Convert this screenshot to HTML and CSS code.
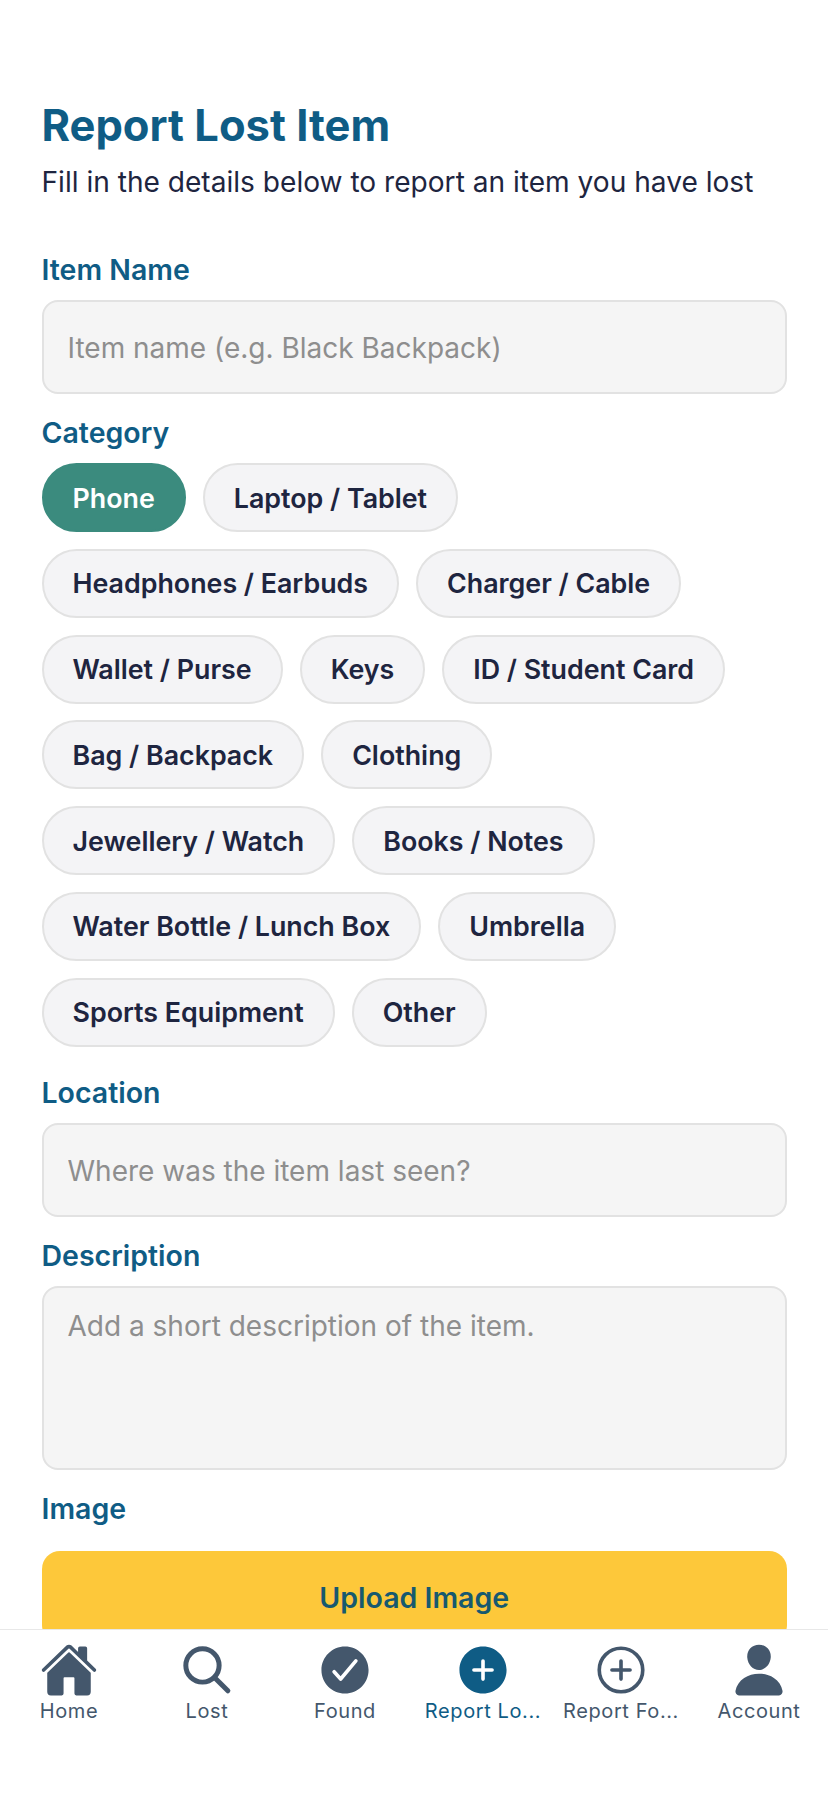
FILE: index.html
```html
<!DOCTYPE html>
<html lang="en">
<head>
    <meta charset="UTF-8">
    <meta name="viewport" content="width=device-width, initial-scale=1.0">
    <title>Report Lost Item</title>
    <link rel="stylesheet" href="styles.css">
</head>
<body>
    <div class="app">
        <main class="content">
            <h1 class="title">Report Lost Item</h1>
            <p class="subtitle">Fill in the details below to report an item you have lost</p>

            <form class="report-form">
                <label class="field-label">Item Name</label>
                <input class="field" type="text" placeholder="Item name (e.g. Black Backpack)">

                <label class="field-label">Category</label>
                <div class="chips">
                    <button type="button" class="chip selected">Phone</button>
                    <button type="button" class="chip">Laptop / Tablet</button>
                    <button type="button" class="chip">Headphones / Earbuds</button>
                    <button type="button" class="chip">Charger / Cable</button>
                    <button type="button" class="chip">Wallet / Purse</button>
                    <button type="button" class="chip">Keys</button>
                    <button type="button" class="chip">ID / Student Card</button>
                    <button type="button" class="chip">Bag / Backpack</button>
                    <button type="button" class="chip">Clothing</button>
                    <button type="button" class="chip">Jewellery / Watch</button>
                    <button type="button" class="chip">Books / Notes</button>
                    <button type="button" class="chip">Water Bottle / Lunch Box</button>
                    <button type="button" class="chip">Umbrella</button>
                    <button type="button" class="chip">Sports Equipment</button>
                    <button type="button" class="chip">Other</button>
                </div>

                <label class="field-label">Location</label>
                <input class="field" type="text" placeholder="Where was the item last seen?">

                <label class="field-label">Description</label>
                <textarea class="field field-area" placeholder="Add a short description of the item."></textarea>

                <label class="field-label">Image</label>
                <button type="button" class="upload-btn">Upload Image</button>
            </form>
        </main>

        <nav class="tab-bar">
            <a class="tab">
                <svg class="tab-icon" viewBox="0 0 512 512" fill="currentColor">
                    <path d="M261.56 101.28a8 8 0 00-11.06 0L66.4 277.15a8 8 0 00-2.47 5.79L63.9 448a32 32 0 0032 32H192a16 16 0 0016-16V328a8 8 0 018-8h80a8 8 0 018 8v136a16 16 0 0016 16h96.06a32 32 0 0032-32V282.94a8 8 0 00-2.47-5.79z"/>
                    <path d="M490.91 244.15l-74.8-71.56V64a16 16 0 00-16-16h-48a16 16 0 00-16 16v32l-57.92-55.38C272.77 35.14 264.71 32 256 32c-8.68 0-16.72 3.14-22.14 8.63l-212.7 203.5c-6.22 6-7 15.87-1.34 22.37A16 16 0 0043 267.56L250.5 69.28a8 8 0 0111.06 0l207.52 198.28a16 16 0 0022.59-.44c6.14-6.36 5.63-16.86-.76-22.97z"/>
                </svg>
                <span class="tab-label">Home</span>
            </a>
            <a class="tab">
                <svg class="tab-icon" viewBox="0 0 512 512" fill="none" stroke="currentColor" stroke-width="44" stroke-linecap="round">
                    <circle cx="216" cy="216" r="147"/>
                    <path d="M322 322L440 440"/>
                </svg>
                <span class="tab-label">Lost</span>
            </a>
            <a class="tab">
                <svg class="tab-icon" viewBox="0 0 512 512" fill="currentColor">
                    <path d="M256 48C141.31 48 48 141.31 48 256s93.31 208 208 208 208-93.31 208-208S370.69 48 256 48zm108.25 138.36l-134.4 160a16 16 0 01-12 5.71h-.27a16 16 0 01-11.89-5.3l-57.6-64a16 16 0 1123.78-21.4l45.29 50.32 122.59-145.91a16 16 0 0124.5 20.58z"/>
                </svg>
                <span class="tab-label">Found</span>
            </a>
            <a class="tab active">
                <svg class="tab-icon" viewBox="0 0 512 512" fill="currentColor">
                    <path d="M256 48C141.31 48 48 141.31 48 256s93.31 208 208 208 208-93.31 208-208S370.69 48 256 48zm80 224h-64v64a16 16 0 01-32 0v-64h-64a16 16 0 010-32h64v-64a16 16 0 0132 0v64h64a16 16 0 010 32z"/>
                </svg>
                <span class="tab-label">Report Lo...</span>
            </a>
            <a class="tab">
                <svg class="tab-icon" viewBox="0 0 512 512" fill="none" stroke="currentColor" stroke-width="32" stroke-linecap="round">
                    <path d="M448 256c0-106-86-192-192-192S64 150 64 256s86 192 192 192 192-86 192-192z"/>
                    <path d="M256 176v160M336 256H176"/>
                </svg>
                <span class="tab-label">Report Fo...</span>
            </a>
            <a class="tab">
                <svg class="tab-icon" viewBox="0 0 512 512" fill="currentColor">
                    <path d="M332.64 64.58C313.18 43.57 286 32 256 32c-30.16 0-57.43 11.5-76.8 32.38-19.58 21.11-29.12 49.8-26.88 80.78C156.76 206.28 203.27 256 256 256s99.16-49.71 103.67-110.82c2.27-30.7-7.33-59.33-27.03-80.6z"/>
                    <path d="M432 480H80a31 31 0 01-24.2-11.13c-6.5-7.77-9.12-18.38-7.18-29.11C57.06 392.94 83.4 353.61 124.8 326c36.78-24.51 83.37-38 131.2-38s94.42 13.5 131.2 38c41.4 27.6 67.74 66.93 76.18 113.75 1.94 10.73-.68 21.34-7.18 29.11A31 31 0 01432 480z"/>
                </svg>
                <span class="tab-label">Account</span>
            </a>
        </nav>
    </div>
</body>
</html>
```

FILE: styles.css
```css
:root {
    --primary: #0f5c85;
    --teal: #3b8b7e;
    --ink: #1e2540;
    --muted: #44576c;
    --field-bg: #f5f5f5;
    --field-border: #e2e2e2;
}

* {
    box-sizing: border-box;
}

html, body {
    margin: 0;
    height: 100%;
}

body {
    background: #fff;
    font-family: Inter, "Noto Sans", sans-serif;
    overflow: hidden;
}

.app {
    height: 1800px;
    display: flex;
    flex-direction: column;
}

.content {
    flex: 1;
    min-height: 0;
    overflow: hidden;
    padding: 101px 41px 0 41.5px;
}

.title {
    margin: 0;
    font-size: 43.5px;
    line-height: 48px;
    font-weight: 700;
    color: var(--primary);
}

.subtitle {
    margin: 15px 0 53px;
    font-size: 28.1px;
    line-height: 36px;
    color: var(--ink);
}

.report-form {
    display: flex;
    flex-direction: column;
}

.field-label {
    margin-bottom: 13px;
    font-size: 28.5px;
    line-height: 34px;
    font-weight: 600;
    color: var(--primary);
}

.field {
    width: 100%;
    height: 94px;
    margin-bottom: 22px;
    padding: 2px 24px 0;
    background: var(--field-bg);
    border: 2px solid var(--field-border);
    border-radius: 16px;
    font-family: inherit;
    font-size: 28px;
    color: var(--ink);
    outline: none;
    resize: none;
}

.field::placeholder {
    color: #8e8e8e;
    opacity: 1;
}

.field-area {
    height: 184px;
    padding-top: 20px;
    line-height: 36px;
}

.chips {
    display: flex;
    flex-wrap: wrap;
    gap: 16.8px 17px;
    margin-bottom: 29px;
}

.chip {
    height: 69px;
    padding: 0 29px;
    background: #f4f4f6;
    border: 2px solid var(--field-border);
    border-radius: 35px;
    font-family: inherit;
    font-size: 26.8px;
    font-weight: 560;
    color: var(--ink);
}

.chip.selected {
    background: var(--teal);
    border-color: var(--teal);
    color: #fff;
}

.upload-btn {
    height: 92px;
    margin-top: 12px;
    padding-top: 2px;
    background: #fdc83a;
    border: none;
    border-radius: 18px;
    font-family: inherit;
    font-size: 28.5px;
    font-weight: 600;
    color: #17596f;
}

.tab-bar {
    height: 171px;
    flex-shrink: 0;
    display: grid;
    grid-template-columns: repeat(6, 1fr);
    background: #fff;
    border-top: 1px solid #e8e8e8;
    padding-top: 11px;
}

.tab {
    display: flex;
    flex-direction: column;
    align-items: center;
    color: var(--muted);
}

.tab.active {
    color: var(--primary);
}

.tab-icon {
    width: 58px;
    height: 58px;
}

.tab-label {
    font-size: 20px;
    line-height: 24px;
    font-weight: 400;
    letter-spacing: 0.6px;
    white-space: nowrap;
}
```
